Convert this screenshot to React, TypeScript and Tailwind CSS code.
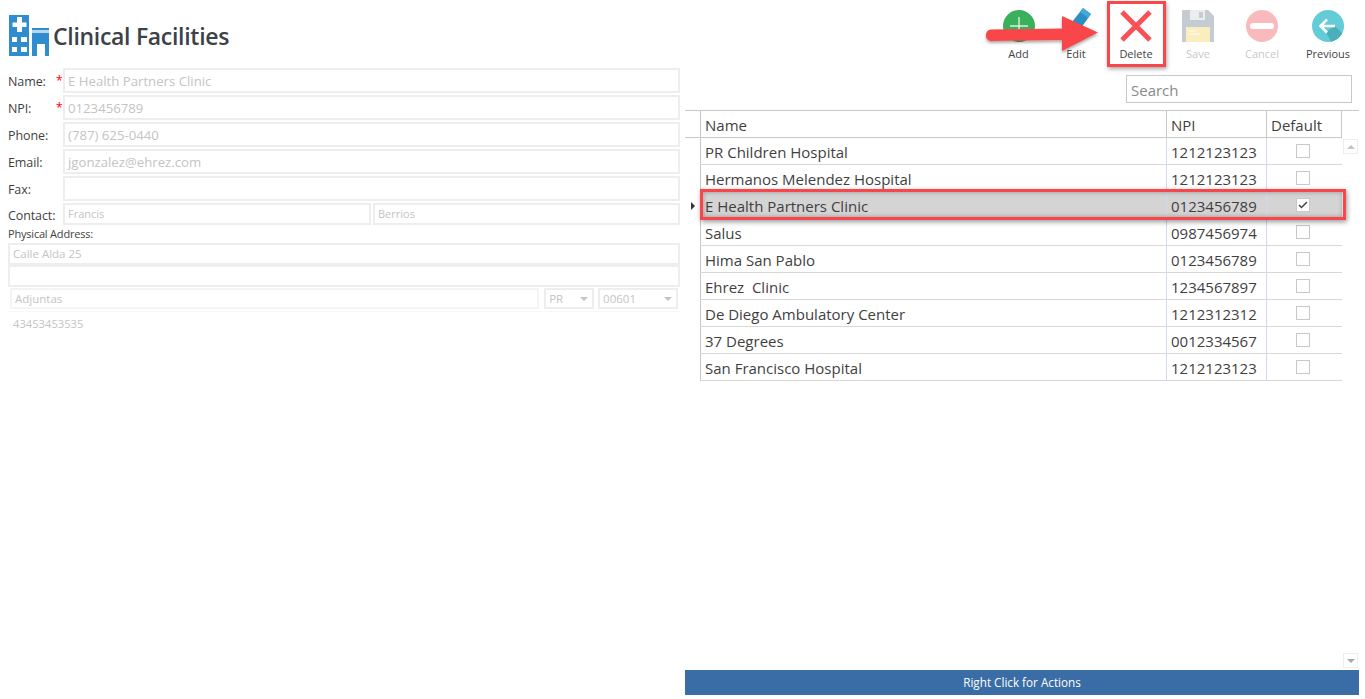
const font = { fontFamily: '"Open Sans", "Noto Sans", sans-serif' };

const facilities = [
  { name: 'PR Children Hospital', npi: '1212123123', def: false },
  { name: 'Hermanos Melendez Hospital', npi: '1212123123', def: false },
  { name: 'E Health Partners Clinic', npi: '0123456789', def: true },
  { name: 'Salus', npi: '0987456974', def: false },
  { name: 'Hima San Pablo', npi: '0123456789', def: false },
  { name: 'Ehrez  Clinic', npi: '1234567897', def: false },
  { name: 'De Diego Ambulatory Center', npi: '1212312312', def: false },
  { name: '37 Degrees', npi: '0012334567', def: false },
  { name: 'San Francisco Hospital', npi: '1212123123', def: false },
];

const formRows = [
  { label: 'Name:', value: 'E Health Partners Clinic', required: true },
  { label: 'NPI:', value: '0123456789', required: true },
  { label: 'Phone:', value: '(787) 625-0440', required: false },
  { label: 'Email:', value: 'jgonzalez@ehrez.com', required: false },
  { label: 'Fax:', value: '', required: false },
];

function Logo() {
  return (
    <svg width="40" height="41" viewBox="0 0 40 41" className="shrink-0">
      <rect x="0" y="0" width="20" height="41" fill="#2f8dcf" />
      <path d="M8 2h5v5.500h4.500v4.500H13v5H8v-5H3.500V7.500H8z" fill="#fff" />
      <rect x="3" y="22" width="5" height="5" fill="#fff" />
      <rect x="12" y="22" width="6" height="5" fill="#fff" />
      <rect x="3" y="32" width="5" height="5" fill="#fff" />
      <rect x="12" y="32" width="6" height="5" fill="#fff" />
      <rect x="23" y="13" width="17" height="2" fill="#2f8dcf" />
      <rect x="23" y="15" width="17" height="3" fill="#b7d9f0" />
      <path d="M23 18h17v23h-4V29h-8v12h-5z" fill="#2f8dcf" />
    </svg>
  );
}

function AddIcon() {
  return (
    <svg width="32" height="32" viewBox="0 0 32 32">
      <circle cx="16" cy="16" r="16" fill="#3bb05c" />
      <path d="M16 7v18M7 16h18" stroke="#d8f0de" strokeWidth="1.400" />
    </svg>
  );
}

function EditIcon() {
  return (
    <svg width="40" height="40" viewBox="0 0 40 40">
      <path d="M27 2l8 6-17 24-12 4 3-11z" fill="#2b8fc4" />
      <path d="M27 2l8 6-3 4-8-6z" fill="#45a9d8" />
      <path d="M9 25l9 7-12 4z" fill="#2a4a68" />
    </svg>
  );
}

function DeleteIcon() {
  return (
    <svg width="32" height="32" viewBox="0 0 32 32">
      <path d="M2 2l28 28M30 2L2 30" stroke="#fb5058" strokeWidth="5" />
    </svg>
  );
}

function SaveIcon() {
  return (
    <svg width="32" height="32" viewBox="0 0 32 32" className="opacity-50">
      <path d="M0 0h26l6 6v26H0z" fill="#8d99a6" />
      <rect x="8" y="0" width="15" height="10" fill="#d9dee2" />
      <rect x="17" y="2" width="4" height="6" fill="#8d99a6" />
      <rect x="4" y="17" width="24" height="15" fill="#f9dc7d" />
      <path d="M7 21h7M7 24h11" stroke="#fff" strokeWidth="1.200" />
    </svg>
  );
}

function CancelIcon() {
  return (
    <svg width="32" height="32" viewBox="0 0 32 32" className="opacity-40">
      <circle cx="16" cy="16" r="16" fill="#f0555a" />
      <rect x="4" y="13" width="24" height="6" rx="3" fill="#fff" />
    </svg>
  );
}

function PreviousIcon() {
  return (
    <svg width="32" height="32" viewBox="0 0 32 32">
      <clipPath id="prevClip">
        <circle cx="16" cy="16" r="16" />
      </clipPath>
      <circle cx="16" cy="16" r="16" fill="#63ccd6" />
      <path d="M14 22l9-6 18 18-17 7z" fill="#4aaebb" clipPath="url(#prevClip)" />
      <path d="M23 16H9M15 9.500L8.500 16l6.500 6.500" fill="none" stroke="#fff" strokeWidth="2.500" />
    </svg>
  );
}

const tools = [
  { label: 'Add', icon: <AddIcon />, width: 'w-[57px]', muted: false },
  { label: 'Edit', icon: <EditIcon />, width: 'w-[58px]', muted: false },
  { label: 'Delete', icon: <DeleteIcon />, width: 'w-[62px]', muted: false },
  { label: 'Save', icon: <SaveIcon />, width: 'w-[62px]', muted: true },
  { label: 'Cancel', icon: <CancelIcon />, width: 'w-[66px]', muted: true },
  { label: 'Previous', icon: <PreviousIcon />, width: 'w-[66px]', muted: false },
];

function Select({ value, className = '' }: { value: string; className?: string }) {
  return (
    <div className={`flex h-[21px] items-center justify-between border-2 border-[#eeeeee] pl-[3px] pr-[4px] text-[11.500px] text-[#c4c4c4] ${className}`}>
      <span>{value}</span>
      <span className="h-0 w-0 border-x-[4px] border-t-[4px] border-x-transparent border-t-[#c4c4c4]" />
    </div>
  );
}

function Checkbox({ checked }: { checked: boolean }) {
  return (
    <span className="flex h-[14px] w-[14px] items-center justify-center border border-[#c8c8c8] bg-white">
      {checked && (
        <svg width="10" height="8" viewBox="0 0 10 8">
          <path d="M1 4l2.500 2.500L9 1" fill="none" stroke="#444" strokeWidth="1.500" />
        </svg>
      )}
    </span>
  );
}

export default function App() {
  return (
    <div style={font} className="relative flex h-[699px] w-[1365px] overflow-hidden bg-white pb-[4px] pr-[6px] text-[#3f3f3f]">
      {/* Left: facility form */}
      <div className="w-[685px] shrink-0">
        <div className="flex h-[68px] items-start pl-[9px] pt-[15px]">
          <Logo />
          <h1 className="ml-[4px] mt-[3px] text-[23px] font-semibold leading-[36px] tracking-[-0.3px] text-[#3d4148]">Clinical Facilities</h1>
        </div>
        <div className="flex flex-col gap-[2px] pl-[8px] pr-[5px]">
          {formRows.map((r) => (
            <div key={r.label} className="flex h-[25px] items-center">
              <span className="w-[48px] pt-[3px] text-[12.500px] leading-[22px] tracking-[-0.1px]">{r.label}</span>
              <span className="w-[7px] text-[12px] leading-none text-[#f00]">{r.required ? '*' : ''}</span>
              <div className="h-[25px] flex-1 border-2 border-[#eeeeee] px-[3px] text-[13.200px] leading-[22px] text-[#c4c4c4]">{r.value}</div>
            </div>
          ))}
          <div className="flex h-[22px] items-center">
            <span className="w-[55px] pt-[3px] text-[12.500px] leading-[20px] tracking-[-0.1px]">Contact:</span>
            <div className="h-[22px] w-[308px] border-2 border-[#eeeeee] px-[3px] text-[11px] leading-[18px] text-[#c4c4c4]">Francis</div>
            <div className="ml-[2px] h-[22px] flex-1 border-2 border-[#eeeeee] px-[3px] text-[11px] leading-[18px] text-[#c4c4c4]">Berrios</div>
          </div>
        </div>
        <div className="pl-[8px] pr-[5px]">
          <div className="h-[18px] pt-[1px] text-[11px] leading-[16px] tracking-[-0.2px]">Physical Address:</div>
          <div className="h-[22px] border-2 border-[#eeeeee] px-[3px] text-[11.500px] leading-[18px] text-[#c4c4c4]">Calle Alda 25</div>
          <div className="h-[22px] border-2 border-[#eeeeee]" />
          <div className="mt-[1px] flex gap-[4px] pl-[2px] pr-[2px]">
            <div className="h-[21px] w-[530px] border-2 border-[#f4f4f4] px-[3px] text-[11.500px] leading-[17px] text-[#c4c4c4]">Adjuntas</div>
            <Select value="PR" className="ml-[1px] w-[50px]" />
            <Select value="00601" className="w-[80px]" />
          </div>
          <div className="mt-[2px] border-t border-[#f8f8f8] pl-[5px] pt-[4px] text-[11.200px] leading-[15px] text-[#c4c4c4]">43453453535</div>
        </div>
      </div>

      {/* Right: toolbar, search and grid */}
      <div className="flex min-w-0 flex-1 flex-col">
        <div className="-mr-[2px] flex h-[75px] justify-end">
          {tools.map((t) => (
            <button key={t.label} type="button" className={`${t.width} flex flex-col items-center pt-[10px]`}>
              <span className="flex h-[32px] items-center justify-center">{t.icon}</span>
              <span className={`mt-[4px] text-[11px] leading-[16px] ${t.muted ? 'text-[#c8c8c8]' : 'text-[#3f3f3f]'}`}>{t.label}</span>
            </button>
          ))}
        </div>
        <div className="flex h-[35px] justify-end pr-[7px]">
          <div className="h-[28px] w-[226px] border border-[#c8c8c8] px-[4px] text-[15px] leading-[28px] text-[#8a8a8a]">Search</div>
        </div>
        <div className="flex min-h-0 flex-1 border-t border-[#c8c8c8]">
          <div className="w-[15px] shrink-0">
            <div className="h-[27px] border-b border-[#c8c8c8]" />
            {facilities.map((f) => (
              <div key={f.name} className="flex h-[27px] items-center justify-center">
                {f.def && <span className="ml-[1px] h-0 w-0 border-y-[4px] border-l-[4px] border-y-transparent border-l-[#333]" />}
              </div>
            ))}
          </div>
          <div className="w-[642px] shrink-0 text-[15px]">
            <div className="flex h-[27px] border-b border-[#c8c8c8]">
              <div className="w-[466px] border-l border-[#c8c8c8] pl-[4px] leading-[29px]">Name</div>
              <div className="w-[100px] border-l border-[#c8c8c8] pl-[4px] leading-[29px]">NPI</div>
              <div className="w-[76px] border-x border-[#c8c8c8] pl-[4px] leading-[29px]">Default</div>
            </div>
            {facilities.map((f) => (
              <div key={f.name} className={`flex h-[27px] border-b border-[#d8d8d8] ${f.def ? 'bg-[#d4d4d4]' : ''}`}>
                <div className="w-[466px] whitespace-pre border-l border-[#c8c8c8] pl-[4px] leading-[29px]">{f.name}</div>
                <div className="w-[100px] border-l border-[#cfdbe8] pl-[4px] leading-[29px]">{f.npi}</div>
                <div className="flex w-[76px] justify-center border-l border-[#cfdbe8] pr-[3px] pt-[6px]">
                  <Checkbox checked={f.def} />
                </div>
              </div>
            ))}
          </div>
          <div className="flex flex-1 flex-col items-start justify-between pb-[2px] pl-[1px] pt-[28px]">
            <span className="flex h-[15px] w-[15px] items-center justify-center border border-[#eeeeee]">
              <span className="h-0 w-0 border-x-[4px] border-b-[4px] border-x-transparent border-b-[#c4c4c4]" />
            </span>
            <span className="flex h-[15px] w-[15px] items-center justify-center border border-[#eeeeee]">
              <span className="h-0 w-0 border-x-[4px] border-t-[4px] border-x-transparent border-t-[#a8a8a8]" />
            </span>
          </div>
        </div>
        <div className="h-[25px] bg-[#3a6ca6] text-center text-[11.700px] leading-[25px] text-white">Right Click for Actions</div>
      </div>

      {/* Annotations drawn over the screen */}
      <div className="absolute left-[1107px] top-[1px] h-[66px] w-[59px] border-[3px] border-[#f9464a] shadow-[1px_2px_4px_rgba(0,0,0,0.35)]" />
      <div className="absolute left-[700px] top-[189px] h-[31px] w-[646px] border-[3px] border-[#f9464a] shadow-[1px_2px_5px_rgba(0,0,0,0.4),inset_0_0_5px_rgba(0,0,0,0.3)]" />
      <svg className="absolute left-[980px] top-[8px]" width="125" height="50" viewBox="0 0 125 50">
        <defs>
          <filter id="arrowShadow" x="-10%" y="-20%" width="120%" height="150%">
            <feDropShadow dx="0" dy="2" stdDeviation="1.500" floodColor="#000" floodOpacity="0.35" />
          </filter>
        </defs>
        <path d="M11 21.500L82 20.500L82 8L118 24.500L82 43L82 32L11 33a5.800 5.800 0 0 1 0-11.500z" fill="#f9464a" filter="url(#arrowShadow)" />
      </svg>
    </div>
  );
}
